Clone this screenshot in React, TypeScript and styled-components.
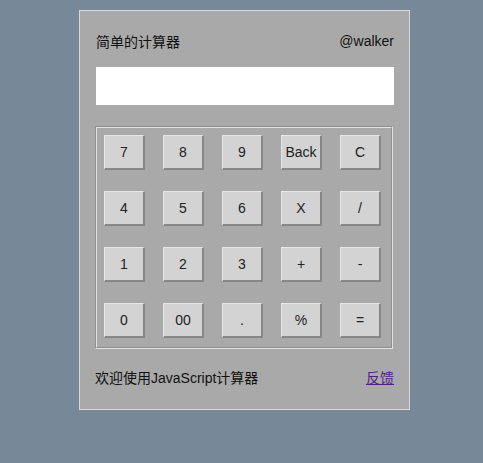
import React from 'react'
import styled, { createGlobalStyle } from 'styled-components'

const GlobalStyle = createGlobalStyle`
  html, body {
    margin: 0;
    padding: 0;
    background: #778899;
    font-family: "Liberation Sans", Arial, "Noto Sans CJK SC", sans-serif;
  }
`

const Page = styled.div`
  padding: 10px 0 0 79px;
`

const Panel = styled.div`
  width: 331px;
  box-sizing: border-box;
  background: #a9a9a9;
  border: 1px solid #d8d8d8;
  padding: 22px 15px 24px 16px;
  display: flex;
  flex-direction: column;
`

const Header = styled.div`
  display: flex;
  justify-content: space-between;
  align-items: center;
  height: 16px;
  font-size: 14px;
  color: #111;
`

const Display = styled.input`
  margin-top: 18px;
  height: 38px;
  width: 298px;
  box-sizing: border-box;
  border: none;
  background: #fff;
  outline: none;
  padding: 0 6px;
  font-size: 18px;
`

const Keypad = styled.div`
  margin: 21px 0 0 -1px;
  width: 298px;
  height: 223px;
  box-sizing: border-box;
  border: 2px groove #e2e2e2;
  padding: 7px 9px 8px 7px;
  display: grid;
  grid-template-columns: repeat(5, 41px);
  grid-auto-rows: 35px;
  column-gap: 18px;
  row-gap: 21px;
`

const Key = styled.button`
  width: 41px;
  height: 35px;
  box-sizing: border-box;
  background: #d3d3d3;
  border-style: solid;
  border-width: 1px 2px 2px 1px;
  border-color: #e6e6e6 #878787 #878787 #e6e6e6;
  font-family: "Liberation Sans", Arial, sans-serif;
  font-size: 14px;
  color: #222;
  padding: 0;
  cursor: pointer;
`

const Footer = styled.div`
  margin: 20px 0 0 -1px;
  display: flex;
  justify-content: space-between;
  align-items: center;
  height: 16px;
  font-size: 14px;
  color: #111;
`

const FeedbackLink = styled.a`
  color: #551a8b;
  text-decoration: underline;
`

const keys = [
  '7', '8', '9', 'Back', 'C',
  '4', '5', '6', 'X', '/',
  '1', '2', '3', '+', '-',
  '0', '00', '.', '%', '=',
]

const App: React.FC = () => {
  return (
    <Page>
      <GlobalStyle />
      <Panel>
        <Header>
          <span>简单的计算器</span>
          <span>@walker</span>
        </Header>
        <Display type="text" readOnly />
        <Keypad>
          {keys.map((k) => (
            <Key key={k}>{k}</Key>
          ))}
        </Keypad>
        <Footer>
          <span>欢迎使用JavaScript计算器</span>
          <FeedbackLink href="#">反馈</FeedbackLink>
        </Footer>
      </Panel>
    </Page>
  )
}

export default App
